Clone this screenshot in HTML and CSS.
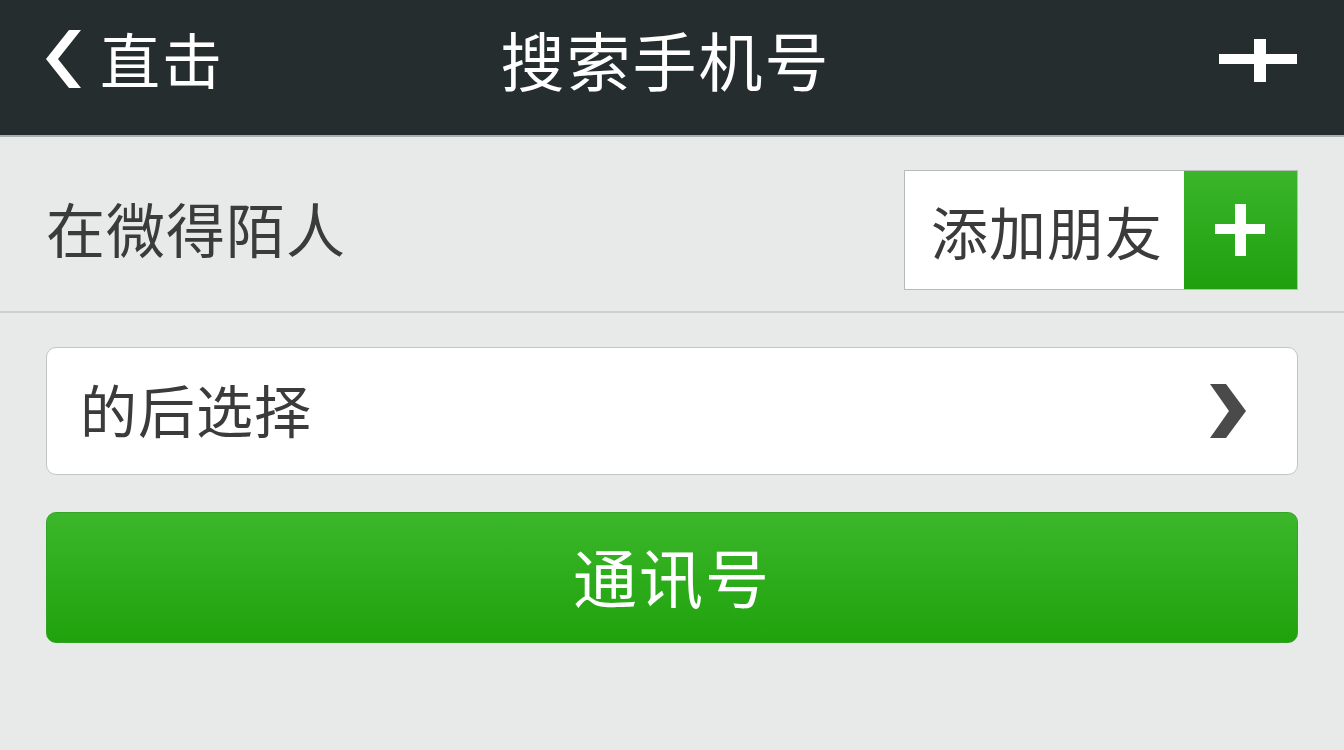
FILE: index.html
```html
<!DOCTYPE html>
<html lang="zh-CN">
<head>
<meta charset="utf-8">
<title>搜索手机号</title>
<link rel="stylesheet" href="styles.css">
</head>
<body>
<header class="topbar">
  <div class="back">
    <svg class="back-icon" width="40" height="64" viewBox="0 0 40 64"><polygon points="25,2 37,2 14,31 37,60 25,60 2,31" fill="#ffffff"/></svg>
    <span class="back-text">直击</span>
  </div>
  <h1 class="title">搜索手机号</h1>
  <div class="actions">
    <svg class="add-icon" width="78" height="44" viewBox="0 0 78 44"><rect x="0" y="15" width="78" height="10" fill="#ffffff"/><rect x="35" y="0" width="12" height="43" fill="#ffffff"/></svg>
  </div>
</header>
<main class="content">
  <section class="row">
    <span class="row-label">在微得陌人</span>
    <button class="add-btn">
      <span class="add-btn-text">添加朋友</span>
      <span class="add-btn-plus">
        <svg width="50" height="52" viewBox="0 0 50 52"><rect x="0" y="20" width="50" height="10" fill="#ffffff"/><rect x="20" y="0" width="11" height="52" fill="#ffffff"/></svg>
      </span>
    </button>
  </section>
  <div class="form">
    <div class="select">
      <span class="select-text">的后选择</span>
      <svg class="select-arrow" width="38" height="56" viewBox="0 0 38 56"><polygon points="1,1 17,1 37,28 17,55 1,55 20,28" fill="#4a4a4a"/></svg>
    </div>
    <button class="primary">通讯号</button>
  </div>
</main>
</body>
</html>
```
FILE: styles.css
```css
html, body {
  margin: 0;
  padding: 0;
}
body {
  width: 1344px;
  height: 750px;
  overflow: hidden;
  background: #e8e9e9;
  font-family: "Noto Sans CJK SC", "Noto Sans", sans-serif;
  color: #3b3b3b;
}
.topbar {
  height: 137px;
  background: #252d2e;
  border-bottom: 2px solid #a9aeae;
  box-sizing: border-box;
  display: grid;
  grid-template-columns: 1fr auto 1fr;
  align-items: center;
  padding: 0 47px 20px 44px;
  color: #ffffff;
}
.back {
  display: flex;
  align-items: center;
  gap: 16px;
  justify-self: start;
}
.back-icon {
  display: block;
  margin-top: 4px;
}
.back-text {
  font-size: 60px;
  line-height: 1;
  letter-spacing: 2px;
}
.title {
  margin: 0 10px 0 0;
  font-size: 64px;
  font-weight: 400;
  line-height: 1;
  letter-spacing: 2px;
}
.actions {
  justify-self: end;
  display: flex;
  align-items: center;
}
.add-icon {
  display: block;
  margin-top: 6px;
}
.content {
  display: flex;
  flex-direction: column;
}
.row {
  display: flex;
  align-items: center;
  justify-content: space-between;
  padding: 33px 46px 21px 46px;
  border-bottom: 2px solid #cfd1d1;
}
.row-label {
  font-size: 59px;
  line-height: 1;
  letter-spacing: 1px;
  margin-top: -6px;
}
.add-btn {
  display: flex;
  align-items: stretch;
  height: 120px;
  padding: 0;
  border: 1px solid #b9bbbb;
  background: #ffffff;
  font-family: inherit;
  cursor: pointer;
}
.add-btn-text {
  width: 279px;
  box-sizing: border-box;
  display: flex;
  align-items: center;
  padding-left: 26px;
  font-size: 57px;
  color: #3b3b3b;
  letter-spacing: 1px;
}
.add-btn-plus {
  width: 113px;
  display: flex;
  align-items: center;
  justify-content: center;
  background: linear-gradient(#3bb52b, #1fa00e);
}
.add-btn-plus svg {
  display: block;
  margin-left: -1px;
}
.form {
  display: flex;
  flex-direction: column;
  gap: 37px;
  padding: 34px 46px 0 46px;
}
.select {
  height: 128px;
  box-sizing: border-box;
  display: flex;
  align-items: center;
  justify-content: space-between;
  padding: 0 50px 0 33px;
  background: #ffffff;
  border: 1px solid #c3c5c5;
  border-radius: 10px;
}
.select-text {
  font-size: 57px;
  line-height: 1;
  letter-spacing: 1px;
  margin-top: -6px;
}
.select-arrow {
  display: block;
}
.primary {
  height: 131px;
  border: 1px solid #34a426;
  border-radius: 10px;
  background: linear-gradient(#3cb72b, #1fa20c);
  color: #ffffff;
  font-family: inherit;
  font-size: 64px;
  letter-spacing: 2px;
  padding: 0 0 6px 0;
  cursor: pointer;
}
```
